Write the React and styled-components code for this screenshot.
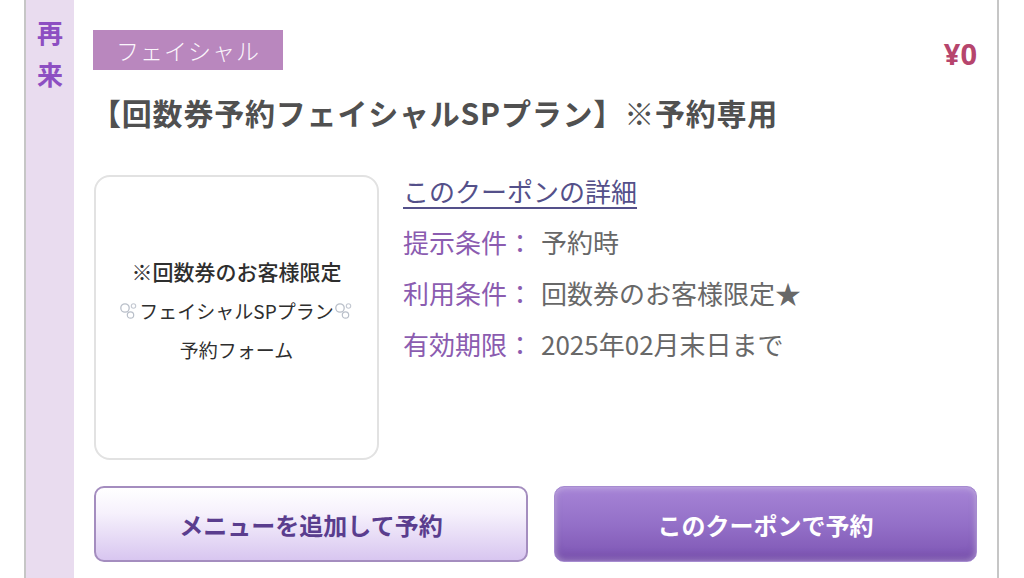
import React from "react";
import styled, { createGlobalStyle } from "styled-components";

const GlobalStyle = createGlobalStyle`
  html, body {
    margin: 0;
    padding: 0;
    background: #ffffff;
  }
  body {
    font-family: "Noto Sans CJK JP", "Noto Sans", sans-serif;
    overflow: hidden;
  }
`;

const Bubbles = ({ flip }) => (
  <svg width="20" height="20" viewBox="0 0 20 20" style={flip ? { transform: "scaleX(-1)" } : undefined}>
    <circle cx="6" cy="7" r="4.2" fill="none" stroke="#b9bfc9" strokeWidth="1.3" />
    <circle cx="14.5" cy="5" r="2.2" fill="none" stroke="#c4c9d2" strokeWidth="1.1" />
    <circle cx="11.5" cy="14" r="3.2" fill="none" stroke="#b9bfc9" strokeWidth="1.2" />
  </svg>
);

const App = () => {
  return (
    <>
      <GlobalStyle />
      <Card>
        <Side>
          <SideChar>再</SideChar>
          <SideChar>来</SideChar>
        </Side>
        <Main>
          <HeaderRow>
            <Tag>フェイシャル</Tag>
            <Price>¥0</Price>
          </HeaderRow>
          <Title>【回数券予約フェイシャルSPプラン】※予約専用</Title>
          <Body>
            <Thumb>
              <ThumbLine $bold>※回数券のお客様限定</ThumbLine>
              <ThumbLine>
                <Bubbles />
                フェイシャルSPプラン
                <Bubbles />
              </ThumbLine>
              <ThumbLine>予約フォーム</ThumbLine>
            </Thumb>
            <Details>
              <DetailLink href="#">このクーポンの詳細</DetailLink>
              <Row>
                <Label>提示条件：</Label>
                <Value>予約時</Value>
              </Row>
              <Row>
                <Label>利用条件：</Label>
                <Value>回数券のお客様限定★</Value>
              </Row>
              <Row>
                <Label>有効期限：</Label>
                <Value>2025年02月末日まで</Value>
              </Row>
            </Details>
          </Body>
          <Buttons>
            <AddButton>メニューを追加して予約</AddButton>
            <BookButton>このクーポンで予約</BookButton>
          </Buttons>
        </Main>
      </Card>
    </>
  );
};

const Card = styled.div`
  display: flex;
  margin-left: 24px;
  width: 975px;
  height: 578px;
  box-sizing: border-box;
  border-left: 2px solid #c6c6c6;
  border-right: 2px solid #c6c6c6;
`;

const Side = styled.div`
  flex: 0 0 48px;
  background: #e9dcef;
  display: flex;
  flex-direction: column;
  align-items: center;
  padding-top: 11px;
`;

const SideChar = styled.div`
  font-size: 26px;
  line-height: 42px;
  font-weight: 700;
  color: #8d4fc2;
`;

const Main = styled.div`
  flex: 1;
  padding: 30px 20px 0 19px;
`;

const HeaderRow = styled.div`
  display: flex;
  justify-content: space-between;
  align-items: flex-start;
`;

const Tag = styled.div`
  width: 190px;
  height: 40px;
  background: #b987be;
  color: #fbf6fc;
  font-size: 23px;
  font-weight: 300;
  line-height: 40px;
  text-align: center;
  letter-spacing: 1px;
`;

const Price = styled.div`
  margin-top: 4px;
  font-family: "Noto Sans", "Noto Sans CJK JP", sans-serif;
  font-size: 29px;
  font-weight: 700;
  line-height: 40px;
  color: #b6456d;
`;

const Title = styled.h1`
  margin: 18px 0 0 -2px;
  font-size: 30px;
  line-height: 40px;
  font-weight: 700;
  color: #505050;
  letter-spacing: 0.8px;
`;

const Body = styled.div`
  display: flex;
  gap: 24px;
  margin-top: 43px;
`;

const Thumb = styled.div`
  flex: 0 0 auto;
  width: 285px;
  height: 285px;
  box-sizing: border-box;
  margin-left: 1px;
  border: 2px solid #e2e2e2;
  border-radius: 16px;
  display: flex;
  flex-direction: column;
  align-items: center;
  justify-content: center;
  gap: 6px;
  padding-bottom: 14px;
`;

const ThumbLine = styled.div`
  display: flex;
  align-items: center;
  font-size: ${(p) => (p.$bold ? "21px" : "19px")};
  font-weight: ${(p) => (p.$bold ? 500 : 400)};
  line-height: 33px;
  color: #2e2e2e;
`;

const Details = styled.div`
  display: flex;
  flex-direction: column;
  gap: 15px;
  margin-top: -2px;
`;

const DetailLink = styled.a`
  font-size: 26px;
  line-height: 36px;
  color: #54508a;
  text-decoration: underline;
  text-decoration-thickness: 2px;
  text-underline-offset: 5px;
  align-self: flex-start;
`;

const Row = styled.div`
  display: flex;
  font-size: 26px;
  line-height: 36px;
`;

const Label = styled.span`
  width: 138px;
  color: #8b5cb0;
`;

const Value = styled.span`
  color: #686868;
`;

const Buttons = styled.div`
  display: flex;
  gap: 26px;
  margin-top: 26px;
  margin-left: 1px;
`;

const BaseButton = styled.button`
  height: 76px;
  box-sizing: border-box;
  border-radius: 10px;
  font-family: "Noto Sans CJK JP", sans-serif;
  font-size: 24px;
  font-weight: 700;
  cursor: pointer;
`;

const AddButton = styled(BaseButton)`
  flex: 0 0 434px;
  border: 2px solid #a48dbf;
  color: #5a3d8e;
  background: linear-gradient(#ffffff 0%, #f6f1fc 35%, #d8c6f0 100%);
`;

const BookButton = styled(BaseButton)`
  flex: 1;
  border: 1px solid #a68bd0;
  color: #ffffff;
  background: linear-gradient(#a684d6 0%, #9470c8 50%, #7d55b3 100%);
  box-shadow: inset 0 0 7px rgba(255, 255, 255, 0.45), inset 0 -5px 9px rgba(60, 20, 110, 0.18);
`;

export default App;
